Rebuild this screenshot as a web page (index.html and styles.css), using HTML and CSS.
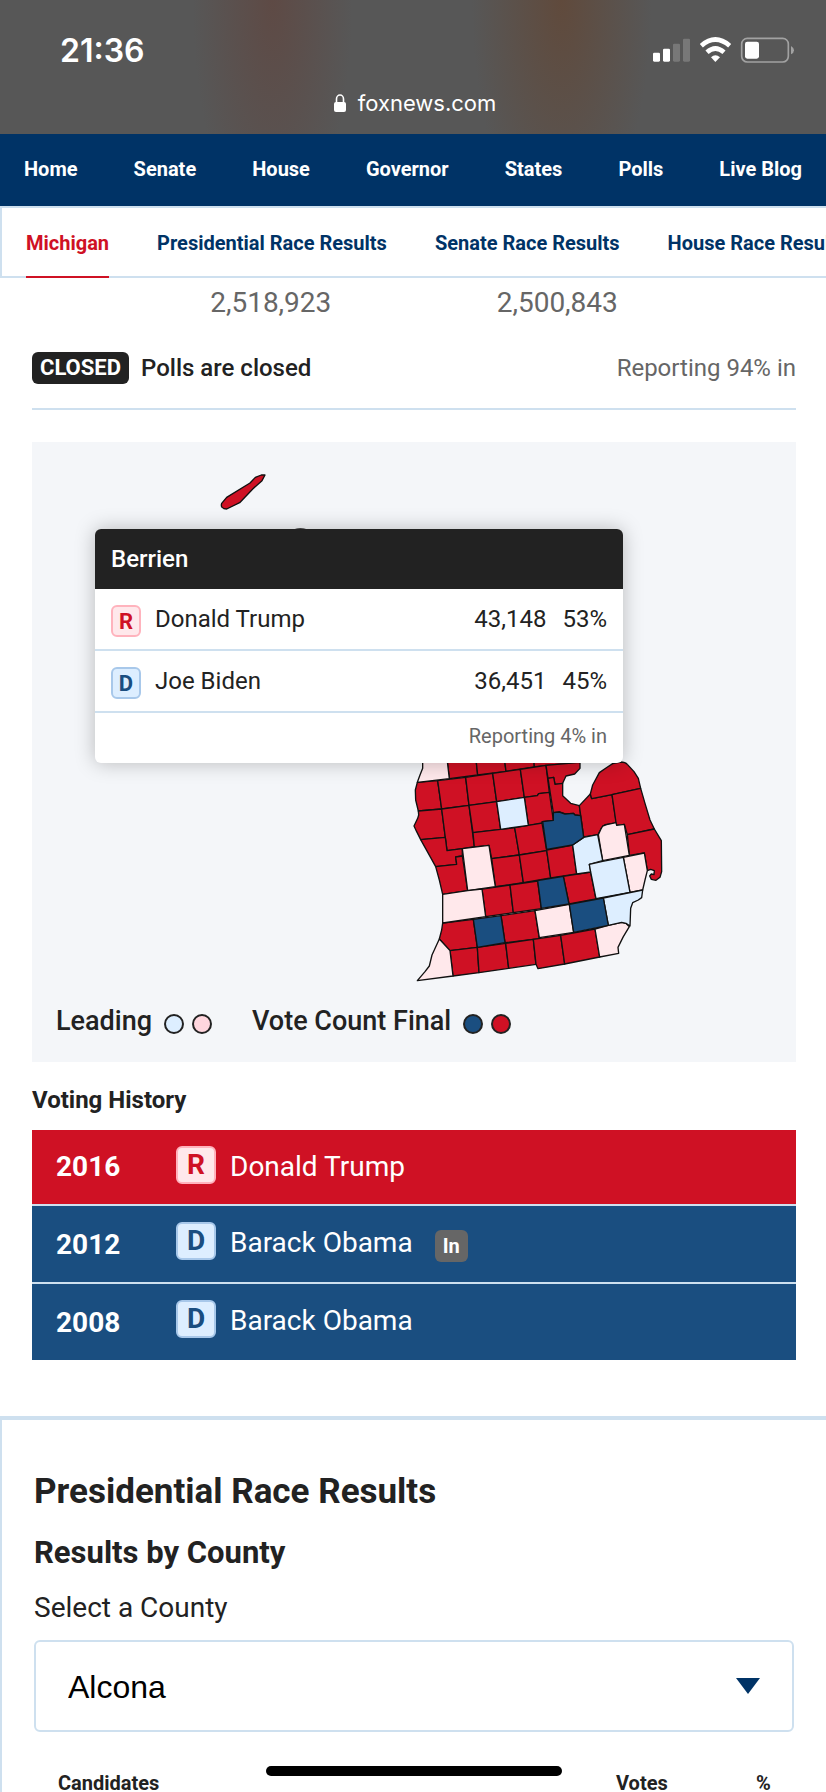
FILE: index.html
```html
<!DOCTYPE html>
<html lang="en">
<head>
    <meta charset="UTF-8">
    <meta name="viewport" content="width=device-width, initial-scale=1.0">
    <title>Michigan Election Results</title>
    <link rel="stylesheet" href="styles.css">
</head>
<body>
    <header class="browser">
        <div class="status">
            <span class="time">21:36</span>
            <svg class="status-icons" viewBox="159 109 426 78" aria-hidden="true">
                <g fill="#fff">
                    <rect x="159" y="156" width="21" height="27" rx="4"/>
                    <rect x="189" y="144" width="21" height="39" rx="4"/>
                    <rect x="219" y="129" width="21" height="54" rx="4" opacity=".2"/>
                    <rect x="249" y="114" width="21" height="69" rx="4" opacity=".2"/>
                    <rect x="435" y="123" width="42" height="51" rx="7"/>
                    <path d="M573 136 Q582 141 582 149 Q582 157 573 161 Z" opacity=".45"/>
                    <path d="M333 170 Q346 158 360 170 L346 184 Z"/>
                </g>
                <rect x="425" y="113" width="140" height="71" rx="17" fill="none" stroke="#fff" stroke-width="5" opacity=".45"/>
                <path d="M304 135 Q346 98 389 135 M321 155 Q346 132 372 155" fill="none" stroke="#fff" stroke-width="14"/>
            </svg>
        </div>
        <div class="address">
            <svg class="lock" viewBox="0 0 12 18" aria-hidden="true">
                <rect x="0" y="8" width="12" height="10" rx="2" fill="#fff"/>
                <path d="M2.5 9V5a3.5 4 0 0 1 7 0v4" fill="none" stroke="#fff" stroke-width="1.6"/>
            </svg>
            <span>foxnews.com</span>
        </div>
    </header>

    <nav class="main-nav">
        <a href="#">Home</a>
        <a href="#">Senate</a>
        <a href="#">House</a>
        <a href="#">Governor</a>
        <a href="#">States</a>
        <a href="#">Polls</a>
        <a href="#">Live Blog</a>
    </nav>
    <nav class="sub-nav">
        <a href="#" class="active">Michigan</a>
        <a href="#">Presidential Race Results</a>
        <a href="#">Senate Race Results</a>
        <a href="#">House Race Results</a>
    </nav>

    <main>
        <section class="summary">
            <div class="totals">
                <span>2,518,923</span>
                <span>2,500,843</span>
            </div>
            <div class="poll-status">
                <span class="closed">CLOSED</span>
                <span class="poll-text">Polls are closed</span>
                <span class="reporting">Reporting 94% in</span>
            </div>

            <div class="map-box">
                <svg class="map" viewBox="-1104 -924 2292 1629" role="img" aria-label="Michigan county map">
                    <g class="rep">
                        <path d="M-405 -825L-416 -825L-434 -818L-450 -801L-520 -758L-535 -740Q-540 -724 -520 -723L-481 -742L-441 -784L-414 -808Z"/>
                        <path d="M-318 -660Q-299 -666 -279 -660Z"/>
                        <path d="M138 0L148 86L233 75L225 0Z"/>
                        <path d="M225 0L233 75L318 64L310 0Z"/>
                        <path d="M310 0L318 64L403 51L400 0Z"/>
                        <path d="M400 0L403 51L438 46L540 37L530 0Z"/>
                        <path d="M52 97L46 120L47 150L55 183L125 177L113 92Z"/>
                        <path d="M113 92L125 177L207 166L197 82Z"/>
                        <path d="M197 82L207 166L290 155L278 70Z"/>
                        <path d="M278 70L290 155L373 142L361 58Z"/>
                        <path d="M361 58L373 142L412 137L416 131L448 127L438 46Z"/>
                        <path d="M438 46L444 85L461 82L465 103L488 100L498 78L524 72L540 55V37Z"/>
                        <path d="M55 183L56 195L53 205L42 228L50 245L62 269L136 262L125 177Z"/>
                        <path d="M125 177L207 166L223 290L187 296L141 302Z"/>
                        <path d="M207 166L290 155L302 238L219 248Z"/>
                        <path d="M373 142L412 137L416 131L448 127L460 211L426 215V220L385 226Z"/>
                        <path d="M444 85L461 82L465 103L488 100V137L512 160L538 167L542 197L525 195L520 190L495 192L478 186L460 188Z"/>
                        <path d="M62 269L136 262L141 302L187 296V318L167 321L170 343L107 350L85 310Z"/>
                        <path d="M107 350L170 343L167 321L187 318L203 422L128 433L118 390Z"/>
                        <path d="M219 248L302 238L344 233L358 315L275 326L267 286L223 291Z"/>
                        <path d="M344 233L385 226L426 219L440 302L358 315Z"/>
                        <path d="M275 326L358 315L370 398L286 410Z"/>
                        <path d="M358 315L440 302L452 384L370 398Z"/>
                        <path d="M440 300L518 285L530 372L452 384Z"/>
                        <path d="M538 167L571 132L575 146L636 134L649 219L615 224L604 235L594 254L551 261Z"/>
                        <path d="M571 132L578 105L598 68L618 54L638 41L662 36Q676 36 682 43L702 65L715 85L722 115L636 134L575 146Z"/>
                        <path d="M636 134L722 115L735 160L750 210L763 237L682 254L673 223L650 226L648 218Z"/>
                        <path d="M682 254L763 237L784 272L785 365L780 382L768 391L754 388L749 378L754 372L762 374L763 362L752 358L742 362L733 309L688 316Z"/>
                        <path d="M246 417L330 405L340 488L257 500Z"/>
                        <path d="M330 405L413 393L424 476L340 488Z"/>
                        <path d="M490 379L572 366L588 447L507 462Z"/>
                        <path d="M128 519L220 508L232 592L150 602L118 567L125 540Z"/>
                        <path d="M303 497L405 482L418 566L315 578Z"/>
                        <path d="M150 602L232 592L237 668L159 678Z"/>
                        <path d="M232 592L317 580L326 655L237 668Z"/>
                        <path d="M317 580L400 568L408 643L326 655Z"/>
                        <path d="M400 568L482 556L494 642L414 656L408 643Z"/>
                        <path d="M482 556L585 537L599 621L494 642Z"/>
                    </g>
                    <g class="rep-lead">
                        <path d="M70 0L68 39V55L60 75L52 97L148 86L138 0Z"/>
                        <path d="M187 296L267 286L286 410L203 422Z"/>
                        <path d="M595 254L604 235L608 228L620 224L648 218L650 226L673 223L688 316L608 332Z"/>
                        <path d="M670 322L733 309L742 362L735 390L728 420L690 427Z"/>
                        <path d="M128 433L203 422L246 417L257 500L128 519Z"/>
                        <path d="M405 482L508 463L521 547L418 563Z"/>
                        <path d="M118 567L150 602L159 678L52 692L75 665L88 648L96 615Z"/>
                        <path d="M585 537L625 526L665 517L678 520L688 530L670 560L654 592L656 610L599 621Z"/>
                    </g>
                    <g class="dem-lead">
                        <path d="M290 155L373 142L385 226L302 238Z"/>
                        <path d="M518 285L551 262L593 254L608 332L568 343L572 366L530 372Z"/>
                        <path d="M568 343L608 334L670 322L690 427L588 446L572 366Z"/>
                        <path d="M610 444L728 420L725 443L715 450L698 458L692 475L690 528L678 520L665 517L625 526Z"/>
                    </g>
                    <g class="dem">
                        <path d="M460 188L478 186L495 192L520 190L525 195L542 197L551 262L518 285L440 298L428 215L460 211Z"/>
                        <path d="M413 392L490 379L507 462L424 475Z"/>
                        <path d="M220 508L303 497L315 578L232 592Z"/>
                        <path d="M508 463L610 444L625 526L521 547Z"/>
                    </g>
                </svg>

                <div class="tooltip">
                    <h4>Berrien</h4>
                    <div class="tip-row">
                        <span class="party r">R</span>
                        <span class="name">Donald Trump</span>
                        <span class="votes">43,148</span>
                        <span>53%</span>
                    </div>
                    <div class="tip-row">
                        <span class="party d">D</span>
                        <span class="name">Joe Biden</span>
                        <span class="votes">36,451</span>
                        <span>45%</span>
                    </div>
                    <div class="tip-footer">Reporting 4% in</div>
                </div>

                <div class="legend">
                    <span>Leading</span>
                    <i class="dot dem-lead"></i>
                    <i class="dot rep-lead"></i>
                    <span class="final">Vote Count Final</span>
                    <i class="dot dem"></i>
                    <i class="dot rep"></i>
                </div>
            </div>

            <h3>Voting History</h3>
            <ul class="history">
                <li class="rep">
                    <span class="year">2016</span>
                    <span class="party r">R</span>
                    <span>Donald Trump</span>
                </li>
                <li class="dem">
                    <span class="year">2012</span>
                    <span class="party d">D</span>
                    <span>Barack Obama</span>
                    <span class="incumbent">In</span>
                </li>
                <li class="dem">
                    <span class="year">2008</span>
                    <span class="party d">D</span>
                    <span>Barack Obama</span>
                </li>
            </ul>
        </section>

        <section class="results">
            <h1>Presidential Race Results</h1>
            <h2>Results by County</h2>
            <label for="county">Select a County</label>
            <div class="select-wrap">
                <select id="county">
                    <option>Alcona</option>
                    <option>Berrien</option>
                </select>
                <svg class="arrow" viewBox="0 0 24 16" aria-hidden="true"><path d="M0 0H24L12 16Z"/></svg>
            </div>
            <table>
                <thead>
                    <tr>
                        <th>Candidates</th>
                        <th class="col-votes">Votes</th>
                        <th class="col-pct">%</th>
                    </tr>
                </thead>
            </table>
        </section>
    </main>
    <div class="home-bar"></div>
</body>
</html>
```
FILE: styles.css
```css
* {
    box-sizing: border-box;
}

body {
    font-family: Roboto, Arial, sans-serif;
    color: #222;
    background-color: #fff;
    margin: 0;
    height: 100vh;
    overflow: hidden;
}

a {
    text-decoration: none;
}

/* phone status bar */
.browser {
    height: 134px;
    color: #fff;
    font-family: Inter, sans-serif;
    background:
        radial-gradient(ellipse 80px 240px at 33% 0, #5e4a45, transparent),
        radial-gradient(ellipse 90px 240px at 68% 0, #604a3c, transparent),
        #575757;
}

.status {
    display: flex;
    justify-content: space-between;
    align-items: center;
    height: 84px;
    padding: 16px 31px 0 60px;
}

.time {
    font-size: 32px;
    font-weight: 600;
}

.status-icons {
    width: 142px;
    height: 26px;
}

.address {
    display: flex;
    justify-content: center;
    align-items: center;
    gap: 12px;
    height: 38px;
    padding-left: 4px;
    font-size: 22px;
}

.lock {
    width: 12px;
    height: 18px;
}

/* navigation */
.main-nav {
    display: flex;
    justify-content: space-between;
    height: 72px;
    padding: 0 24px;
    background-color: #003366;
    font-size: 20px;
    font-weight: 700;
    line-height: 70px;
}

.main-nav a {
    color: #fff;
}

.sub-nav {
    display: flex;
    gap: 48px;
    height: 72px;
    padding-left: 24px;
    border: 2px solid #cee0ef;
    border-right: 0;
    font-size: 20px;
    font-weight: 700;
    line-height: 70px;
    white-space: nowrap;
    overflow-x: clip;
}

.sub-nav a {
    height: 70px;
    color: #003366;
}

.sub-nav .active {
    color: #cf1124;
    border-bottom: 2px solid #cf1124;
}

/* state summary */
.summary {
    padding: 0 30px 56px 32px;
}

.totals {
    display: grid;
    grid-template-columns: 1fr 1fr;
    width: 75%;
    margin: 0 auto;
    padding-top: 8px;
    font-size: 28px;
    line-height: 34px;
    text-align: center;
    color: #666;
}

.poll-status {
    display: flex;
    align-items: center;
    height: 90px;
    padding-top: 8px;
    border-bottom: 2px solid #cee0ef;
    margin-bottom: 32px;
    font-size: 24px;
}

.closed {
    padding: 0 8px;
    margin-right: 12px;
    border-radius: 6px;
    background-color: #222;
    color: #fff;
    font-size: 22px;
    font-weight: 700;
    line-height: 32px;
}

.poll-text {
    font-weight: 500;
}

.reporting {
    margin-left: auto;
    color: #666;
}

/* map */
.map-box {
    position: relative;
    background-color: #f4f6f9;
}

.map {
    display: block;
    width: 100%;
}

.map path {
    stroke: #111;
    stroke-width: 4;
    stroke-linejoin: round;
}

.rep {
    fill: #cf1124;
    background-color: #cf1124;
}

.dem {
    fill: #1a4e80;
    background-color: #1a4e80;
}

.rep-lead {
    fill: #ffe8eb;
    background-color: #ffd6de;
}

.dem-lead {
    fill: #def;
    background-color: #def;
}

.tooltip {
    position: absolute;
    top: 87px;
    left: 63px;
    width: 528px;
    border-radius: 6px;
    background-color: #fff;
    box-shadow: 0 0 20px rgba(0, 0, 0, 0.25);
    overflow: hidden;
    font-size: 24px;
}

.tooltip h4 {
    margin: 0;
    padding: 0 16px;
    background-color: #222;
    color: #fff;
    font-weight: 500;
    line-height: 60px;
}

.tip-row {
    display: flex;
    height: 62px;
    padding: 0 16px;
    border-bottom: 2px solid #cee0ef;
    line-height: 60px;
}

.tip-row .name {
    flex: 1;
    margin-left: 14px;
}

.tip-row .votes {
    margin-right: 16px;
}

.tip-footer {
    padding: 0 16px 4px;
    color: #666;
    font-size: 20px;
    line-height: 46px;
    text-align: right;
}

.party {
    border: 2px solid;
    border-radius: 6px;
    font-weight: 700;
    text-align: center;
}

.party.r {
    border-color: #ffb3bd;
    background-color: #ffe8eb;
    color: #cf1124;
}

.party.d {
    border-color: #a8c8ea;
    background-color: #def;
    color: #1a4e80;
}

.tip-row .party {
    width: 30px;
    height: 32px;
    margin-top: 16px;
    font-size: 22px;
    line-height: 30px;
}

.legend {
    display: flex;
    align-items: center;
    gap: 8px;
    height: 77px;
    padding: 0 24px 6px;
    font-size: 27px;
    font-weight: 500;
}

.legend .dot {
    width: 20px;
    height: 20px;
    margin-top: 6px;
    border: 2px solid #222;
    border-radius: 50%;
}

.legend span {
    margin-right: 4px;
}

.legend .final {
    margin-left: 32px;
}

/* voting history */
h3 {
    margin: 24px 0 16px;
    font-size: 24px;
    line-height: 28px;
}

.history {
    list-style: none;
    margin: 0;
    padding: 0;
    color: #fff;
    font-size: 28px;
}

.history li {
    display: flex;
    height: 78px;
    padding: 0 24px;
    border-top: 2px solid #cee0ef;
    line-height: 74px;
}

.history li:first-child {
    height: 74px;
    border-top: 0;
}

.year {
    width: 120px;
    font-weight: 700;
}

.history .dem .year {
    line-height: 78px;
}

.history .party {
    width: 40px;
    height: 38px;
    margin: 16px 14px 0 0;
    line-height: 34px;
}

.incumbent {
    width: 33px;
    height: 32px;
    margin: 24px 0 0 22px;
    border-radius: 6px;
    background-color: #666;
    font-size: 20px;
    font-weight: 700;
    line-height: 32px;
    text-align: center;
}

/* county results */
.results {
    padding: 48px 32px 0;
    border-top: 4px solid #cee0ef;
    border-left: 2px solid #cee0ef;
}

h1 {
    margin: 0 0 16px;
    font-size: 35px;
    line-height: 48px;
}

h2 {
    margin: 0 0 16px;
    font-size: 31px;
    line-height: 42px;
}

label {
    display: block;
    margin-bottom: 14px;
    font-size: 28px;
    line-height: 36px;
}

.select-wrap {
    position: relative;
}

select {
    display: block;
    width: 100%;
    height: 92px;
    padding: 2px 32px 0;
    border: 2px solid #cee0ef;
    border-radius: 6px;
    background-color: #fff;
    color: #000;
    font-family: "Liberation Sans", Arial, sans-serif;
    font-size: 32px;
    appearance: none;
}

.arrow {
    position: absolute;
    top: 38px;
    right: 34px;
    width: 24px;
    height: 16px;
    fill: #003366;
    pointer-events: none;
}

table {
    width: 100%;
    margin-top: 35px;
    border-collapse: collapse;
    font-size: 20px;
}

th {
    padding: 0 24px;
    line-height: 32px;
    text-align: left;
}

.col-votes {
    width: 140px;
    padding: 0;
}

.col-pct {
    width: 38px;
    padding: 0;
}

.home-bar {
    position: fixed;
    bottom: 16px;
    left: 50%;
    width: 296px;
    height: 10px;
    margin-left: -147px;
    border-radius: 5px;
    background-color: #000;
}
```
